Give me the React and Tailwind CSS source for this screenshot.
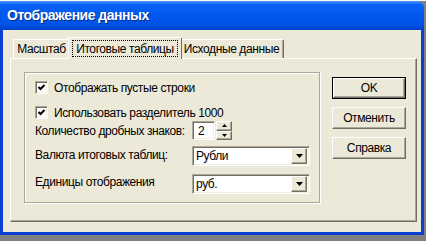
const raised =
  'border border-t-white border-l-white border-b-[#716f64] border-r-[#716f64] shadow-[inset_-1px_-1px_0_#aca899]'
const sunken =
  'border border-t-[#aca899] border-l-[#aca899] border-b-white border-r-white shadow-[inset_1px_1px_0_#716f64,inset_-1px_-1px_0_#f1efe2]'

function Checkbox() {
  return (
    <div className={`w-[13px] h-[13px] bg-white shrink-0 ${sunken} flex items-center justify-center`}>
      <svg width="9" height="9" viewBox="0 0 9 9">
        <polyline points="1.5,4 3.5,6 7.5,2" fill="none" stroke="#000" strokeWidth="2" />
      </svg>
    </div>
  )
}

function Tri({ up = false, w = 7, h = 4 }) {
  return (
    <svg width={w} height={h} viewBox={`0 0 ${w} ${h}`}>
      <polygon points={up ? `0,${h} ${w},${h} ${w / 2},0` : `0,0 ${w},0 ${w / 2},${h}`} fill="#000" />
    </svg>
  )
}

function Combo({ value }) {
  return (
    <div className={`w-[118px] h-[20px] bg-white flex items-center ${sunken} p-[2px]`}>
      <span className="flex-1 pl-[1px] leading-none">{value}</span>
      <div className={`w-[16px] h-[16px] bg-[#ece9d8] flex items-center justify-center ${raised}`}>
        <Tri />
      </div>
    </div>
  )
}

function Button({ label, primary }) {
  const inner = (
    <div className={`h-full w-full flex items-center justify-center bg-[#ece9d8] ${raised}`}>{label}</div>
  )
  return primary ? (
    <div className="w-[74px] h-[22px] border border-black">{inner}</div>
  ) : (
    <div className="w-[74px] h-[22px]">{inner}</div>
  )
}

export default function App() {
  return (
    <div className="w-[426px] h-[241px] bg-[#808080] flex flex-col font-['Liberation_Sans',Arial,sans-serif] text-[12px] tracking-[-0.4px] text-black overflow-hidden">
      <div className="h-[1px] bg-white shrink-0" />
      <div className="w-[424px] h-[234px] flex flex-col shrink-0">
        {/* title bar */}
        <div className="h-[29px] shrink-0 rounded-tr-[7px] bg-[linear-gradient(to_bottom,#4a9bff_0%,#0a63f5_12%,#0058ee_45%,#0052e4_85%,#0040c4_100%)] flex items-center pl-[7px]">
          <span className="text-white font-bold text-[14px] tracking-[-0.5px] [text-shadow:1px_1px_0_#0a2a8a]">
            Отображение данных
          </span>
        </div>
        {/* body */}
        <div className="flex-1 bg-[#ece9d8] border-x-[3px] border-b-[3px] border-[#0b3fd4] pt-[5px] pl-[7px] pr-[4px]">
          {/* tabs */}
          <div className="h-[23px] flex items-end pl-[3px]">
            <div className="w-[57px] h-[19px] flex items-center justify-center border-t border-l border-r border-t-white border-l-white border-r-[#716f64] rounded-t-[2px]">
              Масштаб
            </div>
            <div className="relative z-10 -mx-[2px] w-[114px] h-[22px] -mb-[1px] bg-[#ece9d8] border-t border-l border-r border-t-white border-l-white border-r-[#716f64] rounded-t-[2px] flex items-start justify-center pt-[2px]">
              <div className="h-[17px] w-[106px] border border-dotted border-black flex items-center justify-center">
                Итоговые таблицы
              </div>
            </div>
            <div className="w-[104px] h-[19px] flex items-center justify-center border-t border-r border-t-white border-r-[#716f64] shadow-[inset_-1px_0_0_#aca899] rounded-t-[2px]">
              Исходные данные
            </div>
          </div>
          {/* panel */}
          <div className="w-[407px] h-[164px] border border-t-white border-l-white border-b-[#716f64] border-r-[#716f64] shadow-[inset_-1px_-1px_0_#aca899] pt-[13px] pl-[13px] flex">
            {/* group box */}
            <div className="w-[296px] h-[131px] border border-[#aca899] shadow-[inset_1px_1px_0_white,1px_1px_0_white] pl-[10px] pt-[8px] flex flex-col">
              <div className="h-[13px] flex items-center gap-[6px]">
                <Checkbox />
                <span>Отображать пустые строки</span>
              </div>
              <div className="h-[13px] mt-[12px] flex items-center gap-[6px]">
                <Checkbox />
                <span>Использовать разделитель 1000</span>
              </div>
              <div className="h-[19px] mt-[2px] flex items-center">
                <span className="w-[157px]">Количество дробных знаков:</span>
                <div className={`w-[23px] h-[19px] bg-white ${sunken} flex items-center pl-[5px]`}>2</div>
                <div className="ml-[1px] w-[16px] h-[19px] flex flex-col">
                  <div className={`flex-1 bg-[#ece9d8] flex items-center justify-center ${raised}`}>
                    <Tri up w={5} h={3} />
                  </div>
                  <div className={`flex-1 bg-[#ece9d8] flex items-center justify-center ${raised}`}>
                    <Tri w={5} h={3} />
                  </div>
                </div>
              </div>
              <div className="h-[20px] mt-[6px] flex items-center">
                <span className="w-[157px] -mt-[2px]">Валюта итоговых таблиц:</span>
                <Combo value="Рубли" />
              </div>
              <div className="h-[20px] mt-[8px] flex items-center">
                <span className="w-[157px] -mt-[4px]">Единицы отображения</span>
                <Combo value="руб." />
              </div>
            </div>
            {/* buttons */}
            <div className="ml-[12px] pt-[5px] flex flex-col gap-[8px]">
              <Button label="OK" primary />
              <Button label="Отменить" />
              <Button label="Справка" />
            </div>
          </div>
        </div>
      </div>
    </div>
  )
}
